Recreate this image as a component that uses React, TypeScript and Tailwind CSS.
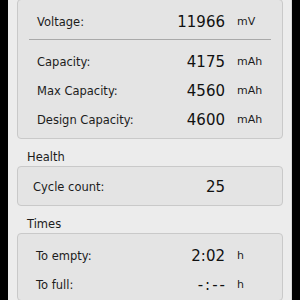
const font = { fontFamily: '"DejaVu Sans", Verdana, sans-serif' };

interface RowProps {
  label: string;
  value: string;
  unit?: string;
  indent?: string;
  valueClass?: string;
}

function Row({ label, value, unit = "", indent = "pl-[19px]", valueClass = "" }: RowProps) {
  return (
    <div className={`flex h-[29px] items-center ${indent}`}>
      <span className="flex-1 text-[11.5px] text-[#1c1c1c]">{label}</span>
      <span className={`text-[15px] text-[#111] ${valueClass}`}>{value}</span>
      <span className="w-[57px] pl-[12px] text-[11px] text-[#1c1c1c]">{unit}</span>
    </div>
  );
}

function GroupLabel({ children }: { children: string }) {
  return (
    <div className="mt-[11px] flex h-[16px] items-center pl-[10px] text-[11.5px] text-[#1c1c1c]">
      {children}
    </div>
  );
}

export default function App() {
  return (
    <div className="flex h-[300px] w-[300px] overflow-hidden bg-black px-[8px]" style={font}>
      <div className="flex h-[300px] w-[284px] flex-col border-r border-[#d6d6d6] bg-[#ececec] pl-[9px] pr-[8px]">
        {/* Power box, top edge runs off the frame */}
        <div className="-mt-px rounded-[4px] border border-[#c9c9c9] bg-[#e4e4e4] pt-[8px] pb-[3px]">
          <Row label="Voltage:" value="11966" unit="mV" />
          <div className="mx-[11px] mt-[2px] mb-[8px] h-px bg-[#a9a9a9]" />
          <Row label="Capacity:" value="4175" unit="mAh" />
          <Row label="Max Capacity:" value="4560" unit="mAh" />
          <Row label="Design Capacity:" value="4600" unit="mAh" />
        </div>

        <GroupLabel>Health</GroupLabel>
        <div className="rounded-[4px] border border-[#c9c9c9] bg-[#e4e4e4] pt-[6px] pb-[3px]">
          <Row label="Cycle count:" value="25" indent="pl-[15px]" />
        </div>

        <GroupLabel>Times</GroupLabel>
        <div className="rounded-[4px] border border-[#c9c9c9] bg-[#e4e4e4] pt-[8px]">
          <Row label="To empty:" value="2:02" unit="h" indent="pl-[18px]" />
          <Row
            label="To full:"
            value="-:--"
            unit="h"
            indent="pl-[18px]"
            valueClass="tracking-[2px] -mr-[2px]"
          />
        </div>
      </div>
    </div>
  );
}
